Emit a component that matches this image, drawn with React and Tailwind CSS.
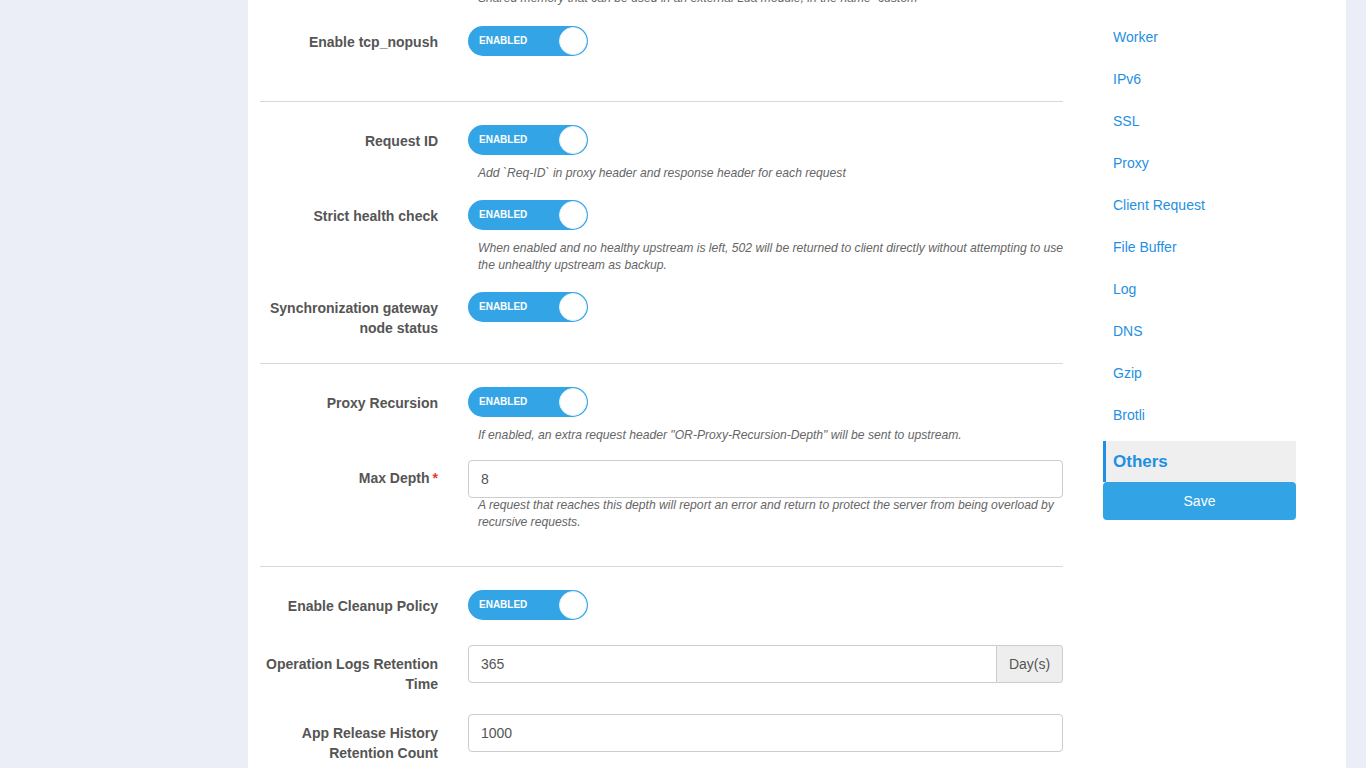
import React from "react";

const font = { fontFamily: '"Liberation Sans", Arial, sans-serif' };

const navItems = [
    "Worker",
    "IPv6",
    "SSL",
    "Proxy",
    "Client Request",
    "File Buffer",
    "Log",
    "DNS",
    "Gzip",
    "Brotli",
];

function Toggle() {
    return (
        <div className="flex h-[30px] w-[120px] items-center justify-between rounded-full bg-[#33a5e6] pl-[11px] pr-[1px]">
            <span className="text-[10px] font-bold leading-none text-white -mt-[1px]">ENABLED</span>
            <span className="h-[28px] w-[28px] rounded-full border border-[#e3f1fb] bg-white" />
        </div>
    );
}

function Help({ children, className = "" }) {
    return (
        <p className={`w-[600px] pl-[10px] text-[12.15px] italic leading-[17px] text-[#666] ${className}`}>
            {children}
        </p>
    );
}

function Row({ label, required, labelPad = "pt-[6px]", className = "", children }) {
    return (
        <div className={`flex ${className}`}>
            <label className={`w-[178px] shrink-0 text-right text-[14px] font-bold leading-[20px] text-[#555] ${labelPad}`}>
                {label}
                {required && <span className="ml-[3px] text-[#e53935]">*</span>}
            </label>
            <div className="ml-[30px] w-[595px]">{children}</div>
        </div>
    );
}

function TextInput({ value, addon }) {
    return (
        <div className="flex h-[38px]">
            <div
                className={`flex flex-1 items-center border border-[#ccc] bg-white pl-[12px] text-[14px] text-[#555] ${
                    addon ? "rounded-l-[4px]" : "rounded-[4px]"
                }`}
            >
                {value}
            </div>
            {addon && (
                <div className="flex w-[66px] items-center justify-center rounded-r-[4px] border border-l-0 border-[#ccc] bg-[#eee] text-[14px] text-[#555]">
                    {addon}
                </div>
            )}
        </div>
    );
}

function Divider({ className = "" }) {
    return <div className={`h-px w-[803px] bg-[#d3d9de] ${className}`} />;
}

export default function App() {
    return (
        <div className="flex h-[768px] w-[1366px] overflow-hidden bg-[#ebeef6]" style={font}>
            <div className="w-[248px] shrink-0" />

            <main className="flex w-[1098px] shrink-0 bg-white">
                {/* settings form, scrolled part-way down */}
                <section className="pl-[12px]">
                    <Row label="" className="-mt-[10px]">
                        <Help className="mt-0">
                            Shared memory that can be used in an external Lua module, in the name `custom
                        </Help>
                    </Row>

                    <Row label="Enable tcp_nopush" className="mt-[19px]">
                        <Toggle />
                    </Row>

                    <Divider className="mt-[45px]" />

                    <Row label="Request ID" className="mt-[23px]">
                        <Toggle />
                        <Help className="mt-[10px]">
                            Add `Req-ID` in proxy header and response header for each request
                        </Help>
                    </Row>

                    <Row label="Strict health check" className="mt-[18px]">
                        <Toggle />
                        <Help className="mt-[10px]">
                            When enabled and no healthy upstream is left, 502 will be returned to client directly
                            without attempting to use the unhealthy upstream as backup.
                        </Help>
                    </Row>

                    <Row label="Synchronization gateway node status" className="mt-[18px]">
                        <Toggle />
                    </Row>

                    <Divider className="mt-[25px]" />

                    <Row label="Proxy Recursion" className="mt-[23px]">
                        <Toggle />
                        <Help className="mt-[10px]">
                            If enabled, an extra request header "OR-Proxy-Recursion-Depth" will be sent to upstream.
                        </Help>
                    </Row>

                    <Row label="Max Depth" required labelPad="pt-[8px]" className="mt-[16px]">
                        <TextInput value="8" />
                        <Help className="-mt-[1px]">
                            A request that reaches this depth will report an error and return to protect the server
                            from being overload by recursive requests.
                        </Help>
                    </Row>

                    <Divider className="mt-[35px]" />

                    <Row label="Enable Cleanup Policy" className="mt-[23px]">
                        <Toggle />
                    </Row>

                    <Row label="Operation Logs Retention Time" labelPad="pt-[9px]" className="mt-[25px]">
                        <TextInput value="365" addon="Day(s)" />
                    </Row>

                    <Row label="App Release History Retention Count" labelPad="pt-[9px]" className="mt-[20px]">
                        <TextInput value="1000" />
                    </Row>
                </section>

                {/* section navigation */}
                <aside className="ml-[40px] w-[193px] shrink-0 pt-[16px]">
                    <ul>
                        {navItems.map((item) => (
                            <li key={item} className="flex h-[42px] items-center pl-[10px] text-[14px] text-[#1f8fe3]">
                                {item}
                            </li>
                        ))}
                    </ul>
                    <div className="mt-[5px] flex h-[41px] items-center border-l-[3px] border-[#1f8fe3] bg-[#efefef] pl-[7px] text-[17px] font-bold text-[#1f8fe3]">
                        Others
                    </div>
                    <button className="flex h-[38px] w-full items-center justify-center rounded-[4px] bg-[#32a4e6] text-[14px] text-white">
                        Save
                    </button>
                </aside>
            </main>

            <div className="flex-1" />
        </div>
    );
}
